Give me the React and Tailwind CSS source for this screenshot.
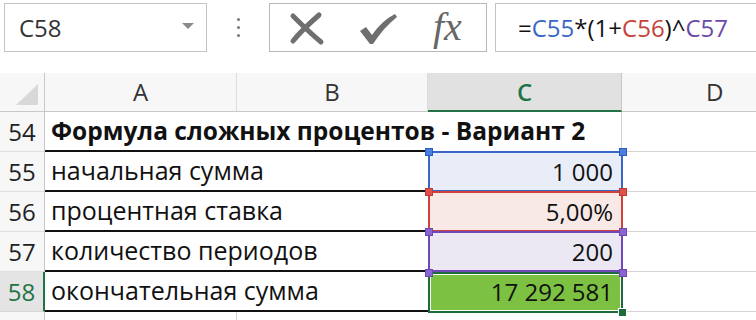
import React from "react";

const font = { fontFamily: '"Open Sans", "Noto Sans", sans-serif' };

function XIcon() {
  return (
    <svg width="40" height="36" viewBox="0 0 40 36">
      <path d="M6 6 C14 14 22 22 34 32" stroke="#6f6f6f" strokeWidth="5" strokeLinecap="round" fill="none" />
      <path d="M32 5 C24 12 14 21 6 31" stroke="#6f6f6f" strokeWidth="5" strokeLinecap="round" fill="none" />
    </svg>
  );
}

function CheckIcon() {
  return (
    <svg width="42" height="36" viewBox="0 0 42 36">
      <path d="M3 20 L9 16 L15 24 C22 14 30 7 38 3 L40 6 C31 13 23 22 16 33 L13 33 Z" fill="#6f6f6f" />
    </svg>
  );
}

function Row({ num, a, c, selected, bold, cBg }) {
  return (
    <div className="flex h-[40px]">
      <div
        className={
          "w-[45px] shrink-0 flex items-center justify-center border-r border-b text-[24px] " +
          (selected
            ? "bg-[#e4e4e4] text-[#217346] border-r-[#217346] border-r-2 border-b-[#d6d6d6]"
            : "bg-[#f7f7f7] text-[#222] border-r-[#c8c8c8] border-b-[#e0e0e0]")
        }
        style={font}
      >
        {num}
      </div>
      <div
        className={
          "w-[383px] shrink-0 flex items-center pl-[6px] text-[#111] whitespace-nowrap relative z-10 border-b-2 border-b-[#111] " +
          (bold ? "font-bold text-[24.5px]" : "text-[25px]")
        }
        style={font}
      >
        {a}
      </div>
      <div
        className={"w-[194px] shrink-0 flex items-center justify-end pr-[8px] text-[24px] text-[#111] border-r border-r-[#d0d0d0] " + (cBg || "")}
        style={font}
      >
        {c}
      </div>
      <div className="flex-1 border-b border-b-[#d4d4d4]" />
    </div>
  );
}

export default function App() {
  return (
    <div className="w-[756px] h-[320px] bg-white overflow-hidden relative">
      {/* Top formula bar */}
      <div className="h-[73px] flex items-start pt-[3px]">
        <div
          className="ml-[4px] w-[203px] h-[49px] border border-[#c4c4c4] flex items-center pl-[14px] pr-[12px] text-[24px] text-[#333]"
          style={font}
        >
          <span className="flex-1">C58</span>
          <svg width="12" height="7" viewBox="0 0 12 7" className="mb-[2px]">
            <path d="M0 0 L12 0 L6 6 Z" fill="#8a8a8a" />
          </svg>
        </div>
        <div className="w-[62px] h-[49px] flex flex-col items-center justify-center gap-[5px]">
          <div className="w-[3px] h-[3px] bg-[#777] rounded-full" />
          <div className="w-[3px] h-[3px] bg-[#777] rounded-full" />
          <div className="w-[3px] h-[3px] bg-[#777] rounded-full" />
        </div>
        <div className="w-[218px] h-[49px] border border-[#b8b8b8] flex items-center">
          <div className="ml-[17px]">
            <XIcon />
          </div>
          <div className="ml-[30px] mt-[3px]">
            <CheckIcon />
          </div>
          <div
            className="ml-[34px] text-[40px] italic text-[#666] leading-none pb-[2px]"
            style={{ fontFamily: '"Liberation Serif", "DejaVu Serif", serif' }}
          >
            fx
          </div>
        </div>
        <div
          className="ml-[8px] flex-1 -mr-[10px] h-[49px] border border-[#c4c4c4] flex items-center pl-[22px] text-[24px] text-[#111]"
          style={font}
        >
          <span>=</span>
          <span className="text-[#3a66c8]">C55</span>
          <span>*(1+</span>
          <span className="text-[#c8413a]">C56</span>
          <span>)^</span>
          <span className="text-[#6a4aa8]">C57</span>
        </div>
      </div>

      {/* Sheet */}
      <div className="relative">
        {/* Column headers */}
        <div className="flex h-[39px] border-b border-b-[#c8c8c8]">
          <div className="w-[45px] shrink-0 border-r border-r-[#c8c8c8] bg-[#f7f7f7] flex items-end justify-end pr-[6px] pb-[6px]">
            <svg width="22" height="21" viewBox="0 0 22 21">
              <path d="M22 0 L22 21 L0 21 Z" fill="#d8d8d8" />
            </svg>
          </div>
          <div className="w-[192px] shrink-0 border-r border-r-[#dcdcdc] bg-[#f7f7f7] flex items-center justify-center text-[24px] text-[#333]" style={font}>
            A
          </div>
          <div className="w-[191px] shrink-0 border-r border-r-[#dcdcdc] bg-[#f7f7f7] flex items-center justify-center text-[24px] text-[#333]" style={font}>
            B
          </div>
          <div className="w-[194px] shrink-0 border-r border-r-[#c8c8c8] bg-[#e1e1e1] border-b-2 border-b-[#217346] -mb-[1px] flex items-center justify-center text-[24px] font-semibold text-[#217346]" style={font}>
            C
          </div>
          <div className="flex-1 bg-[#f7f7f7] flex items-center pl-[84px] text-[24px] text-[#333]" style={font}>
            D
          </div>
        </div>

        <Row num="54" a="Формула сложных процентов - Вариант 2" bold />
        <Row num="55" a="начальная сумма" c="1 000" cBg="bg-[#e9edf7]" />
        <Row num="56" a="процентная ставка" c="5,00%" cBg="bg-[#f8e9e6]" />
        <Row num="57" a="количество периодов" c="200" cBg="bg-[#ebe8f3]" />
        <Row num="58" a="окончательная сумма" c="17 292 581" selected cBg="bg-[#7dc142]" />
        <div className="flex h-[10px]">
          <div className="w-[45px] shrink-0 border-r border-r-[#c8c8c8] bg-[#f7f7f7]" />
          <div className="w-[192px] shrink-0 border-r border-r-[#d4d4d4]" />
          <div className="flex-1" />
        </div>

        {/* Range highlights (overlay) */}
        <div className="absolute left-[428px] top-[78px] w-[195px] h-[41px] border-2 border-[#3a66c8] z-20" />
        <div className="absolute left-[428px] top-[118px] w-[195px] h-[41px] border-2 border-[#d0413a] z-20" />
        <div className="absolute left-[428px] top-[158px] w-[195px] h-[41px] border-2 border-[#7048b8] z-20" />
        {/* Selection */}
        <div className="absolute left-[428px] top-[199px] w-[195px] h-[41px] border-2 border-[#1d6b3b] z-20">
          <div className="w-full h-full border border-white" />
        </div>
        {/* handles */}
        <div className="absolute z-30 left-[425px] top-[75px] w-[8px] h-[8px] bg-[#4a7fe0] border border-[#2a5cc0]" />
        <div className="absolute z-30 left-[619px] top-[75px] w-[8px] h-[8px] bg-[#4a7fe0] border border-[#2a5cc0]" />
        <div className="absolute z-30 left-[425px] top-[115px] w-[8px] h-[8px] bg-[#e0504a] border border-[#c03a34]" />
        <div className="absolute z-30 left-[619px] top-[115px] w-[8px] h-[8px] bg-[#e0504a] border border-[#c03a34]" />
        <div className="absolute z-30 left-[425px] top-[155px] w-[8px] h-[8px] bg-[#8a64d0] border border-[#6a48b0]" />
        <div className="absolute z-30 left-[619px] top-[155px] w-[8px] h-[8px] bg-[#8a64d0] border border-[#6a48b0]" />
        <div className="absolute z-30 left-[425px] top-[196px] w-[8px] h-[8px] bg-[#8a64d0] border border-[#6a48b0]" />
        <div className="absolute z-30 left-[619px] top-[196px] w-[8px] h-[8px] bg-[#8a64d0] border border-[#6a48b0]" />
        <div className="absolute z-30 left-[618px] top-[235px] w-[9px] h-[9px] bg-[#1d6b3b] border border-white" />
      </div>
    </div>
  );
}
